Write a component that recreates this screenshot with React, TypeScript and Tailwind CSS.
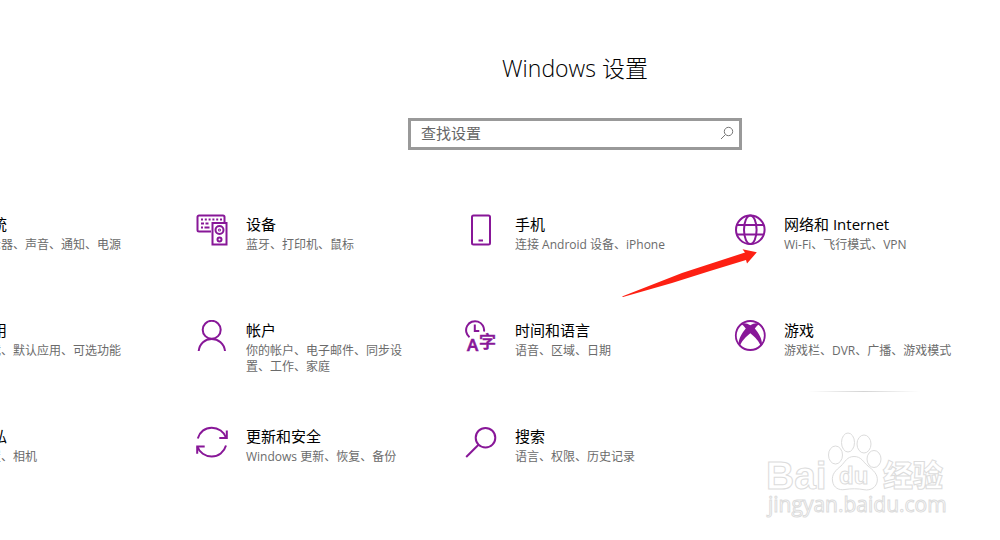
import React from "react";

const DevicesIcon = () => (
  <>
    <path d="M15 17.5H3a1.5 1.5 0 0 1-1.5-1.5V3A1.5 1.5 0 0 1 3 1.500h24A1.500 1.500 0 0 1 28.500 3v5" />
    <path d="M5 5.500h21" strokeDasharray="2 1.800" />
    <path d="M5 9.500h9" strokeDasharray="3 1.500" />
    <path d="M5 13.500h2M8.500 13.500h5" />
    <rect x="16.500" y="9" width="14" height="21.500" />
    <circle cx="23.500" cy="16" r="4" />
    <circle cx="23.500" cy="16" r="0.500" />
    <circle cx="23.500" cy="25.500" r="2" />
  </>
);

const PhoneIcon = () => (
  <>
    <rect x="7" y="1.500" width="18" height="29" rx="1.500" />
    <path d="M13.500 26.500h4.500" />
  </>
);

const GlobeIcon = () => (
  <>
    <circle cx="16.300" cy="15.800" r="14.300" />
    <ellipse cx="16.300" cy="15.800" rx="6.300" ry="14.300" />
    <path d="M3 11h26.600M3 20.500h26.600" />
  </>
);

const UserIcon = () => (
  <>
    <circle cx="15.700" cy="9.800" r="9" />
    <path d="M2.700 31C3.500 23.500 9 18.900 15.700 18.900S28.200 23.500 29 31" />
  </>
);

const TimeIcon = () => (
  <>
    <path d="M4.500 17.200A9 9 0 1 1 19 11.500" />
    <path d="M9.800 4.500V11h4.500" />
    <g fill="#881798" strokeWidth="0.600">
      <text x="2" y="31" fontSize="17" fontWeight="600">A</text>
      <text x="14" y="28" fontSize="17" fontWeight="500">字</text>
    </g>
  </>
);

const XboxIcon = () => (
  <>
    <circle cx="16.300" cy="15.500" r="14.500" strokeWidth="1.800" />
    <path
      d="M7.500 4.200C10 2.500 13 3.200 16.300 5.200C19.600 3.200 22.600 2.500 25.100 4.200C23.600 5 22.200 6.500 20.800 8.600C24.500 12.800 28.200 19 28 24.500L26.500 26C25.500 21.500 21 17 16.300 13.200C11.600 17 7.100 21.500 6.100 26L4.600 24.500C4.400 19 8.100 12.800 11.800 8.600C10.400 6.500 9 5 7.500 4.200Z"
      fill="#881798"
      stroke="none"
    />
  </>
);

const SyncIcon = () => (
  <>
    <path d="M1.800 12.500C3.500 6 9 1.700 15.700 1.700C22.500 1.700 28 6 30 11.500" />
    <path d="M30.800 4.500V12h-7.500" />
    <path d="M30 19.500C28.200 26 22.500 30.500 15.700 30.500C9 30.500 3.500 26.500 1.500 20.800" />
    <path d="M1.200 27.800V20.500h7.500" />
  </>
);

const SearchIcon = () => (
  <>
    <circle cx="20.500" cy="11.700" r="9.800" />
    <path d="M13.500 18.700L1.200 31" />
  </>
);

const categories = [
  { title: "系统", detail: "显示器、声音、通知、电源" },
  { title: "设备", detail: "蓝牙、打印机、鼠标", icon: <DevicesIcon /> },
  { title: "手机", detail: "连接 Android 设备、iPhone", icon: <PhoneIcon /> },
  { title: "网络和 Internet", detail: "Wi-Fi、飞行模式、VPN", icon: <GlobeIcon />, marked: true },
  { title: "应用", detail: "卸载、默认应用、可选功能" },
  { title: "帐户", detail: "你的帐户、电子邮件、同步设置、工作、家庭", icon: <UserIcon /> },
  { title: "时间和语言", detail: "语音、区域、日期", icon: <TimeIcon /> },
  { title: "游戏", detail: "游戏栏、DVR、广播、游戏模式", icon: <XboxIcon /> },
  { title: "隐私", detail: "位置、相机" },
  { title: "更新和安全", detail: "Windows 更新、恢复、备份", icon: <SyncIcon /> },
  { title: "搜索", detail: "语言、权限、历史记录", icon: <SearchIcon /> },
];

const Arrow = () => (
  <svg className="absolute -left-28 top-8 pointer-events-none" width="136" height="52" viewBox="0 0 136 52" aria-hidden="true">
    <path
      d="M0 50.500L60 27L123 6.500L120.500 3.300L134.800 6.300L125 17.500L124 14L88 25L50 37L1 51Z"
      fill="#fd2013"
    />
  </svg>
);

const Category = ({ title, detail, icon, marked }: { title: string; detail: string; icon?: React.ReactNode; marked?: boolean }) => {
  return (
    <a href="#" className="relative flex gap-[18px]">
      <svg className="shrink-0" width="32" height="32" viewBox="0 0 32 32" fill="none" stroke="#881798" strokeWidth="2" aria-hidden="true">
        {icon}
      </svg>
      <div className="w-44">
        <p className="text-[15px] leading-5 text-black whitespace-nowrap">{title}</p>
        <p className="mt-[3px] w-[170px] text-[12px] leading-4 text-[#6b6b6b]">{detail}</p>
      </div>
      {marked && <Arrow />}
    </a>
  );
};

const Watermark = () => (
  <svg className="absolute right-[30px] bottom-[10px] pointer-events-none" width="220" height="110" viewBox="0 0 220 110" fill="#fff" stroke="#dcdcdc">
    <text x="16" y="69" fontSize="39" fontWeight="700" fontFamily="Liberation Sans">Bai</text>
    <ellipse cx="85.500" cy="35" rx="7" ry="9" />
    <ellipse cx="98" cy="22.500" rx="6.500" ry="9.500" />
    <ellipse cx="114" cy="24" rx="7" ry="9" />
    <ellipse cx="124" cy="39" rx="7" ry="8.500" />
    <path d="M104 36.500C97 36.500 95 42 91 46C86 50 81.500 54 82.500 61C83.500 68 89 70.500 95 69.500C101 68.500 108 68.500 114 69.700C121 71 126.500 67 127.300 61C128 54 123 50 118 46C113 42 111.500 36.500 104 36.500Z" />
    <text x="89" y="64" fontSize="24" fontWeight="700" fontFamily="Liberation Sans">du</text>
    <text x="133" y="66" fontSize="30" fontWeight="900">经验</text>
    <text x="18" y="92" fontSize="21" fontFamily="Open Sans">jingyan.baidu.com</text>
  </svg>
);

const App = () => {
  return (
    <div className="relative min-h-screen overflow-hidden bg-white pt-[52px] font-['Open_Sans','Noto_Sans_CJK_SC',sans-serif]">
      <header className="flex flex-col items-center pl-[150px]">
        <h1 className="text-[23px] leading-8 font-light text-black">Windows 设置</h1>
        <label className="mt-[34px] flex h-8 w-[334px] items-center border-3 border-[#999] pl-[10px] pr-[5px] pb-[2px]">
          <input
            type="text"
            aria-label="查找设置"
            placeholder="查找设置"
            className="min-w-0 flex-1 text-[15px] leading-5 outline-none placeholder:text-[#666]"
          />
          <svg width="14" height="14" viewBox="0 0 14 14" fill="none" stroke="#777" aria-hidden="true">
            <circle cx="8.500" cy="5.500" r="4.200" />
            <path d="M5.500 8.500L1 13" />
          </svg>
        </label>
      </header>

      <main className="mt-16 -ml-[73px] -mr-[3px] grid grid-cols-4 auto-rows-[106px]">
        {categories.map((item) => (
          <Category key={item.title} {...item} />
        ))}
      </main>

      <div className="absolute right-20 bottom-[148px] h-px w-28 bg-linear-to-r from-white via-[#d4d4d4] to-white" />
      <Watermark />
    </div>
  );
};

export default App;
